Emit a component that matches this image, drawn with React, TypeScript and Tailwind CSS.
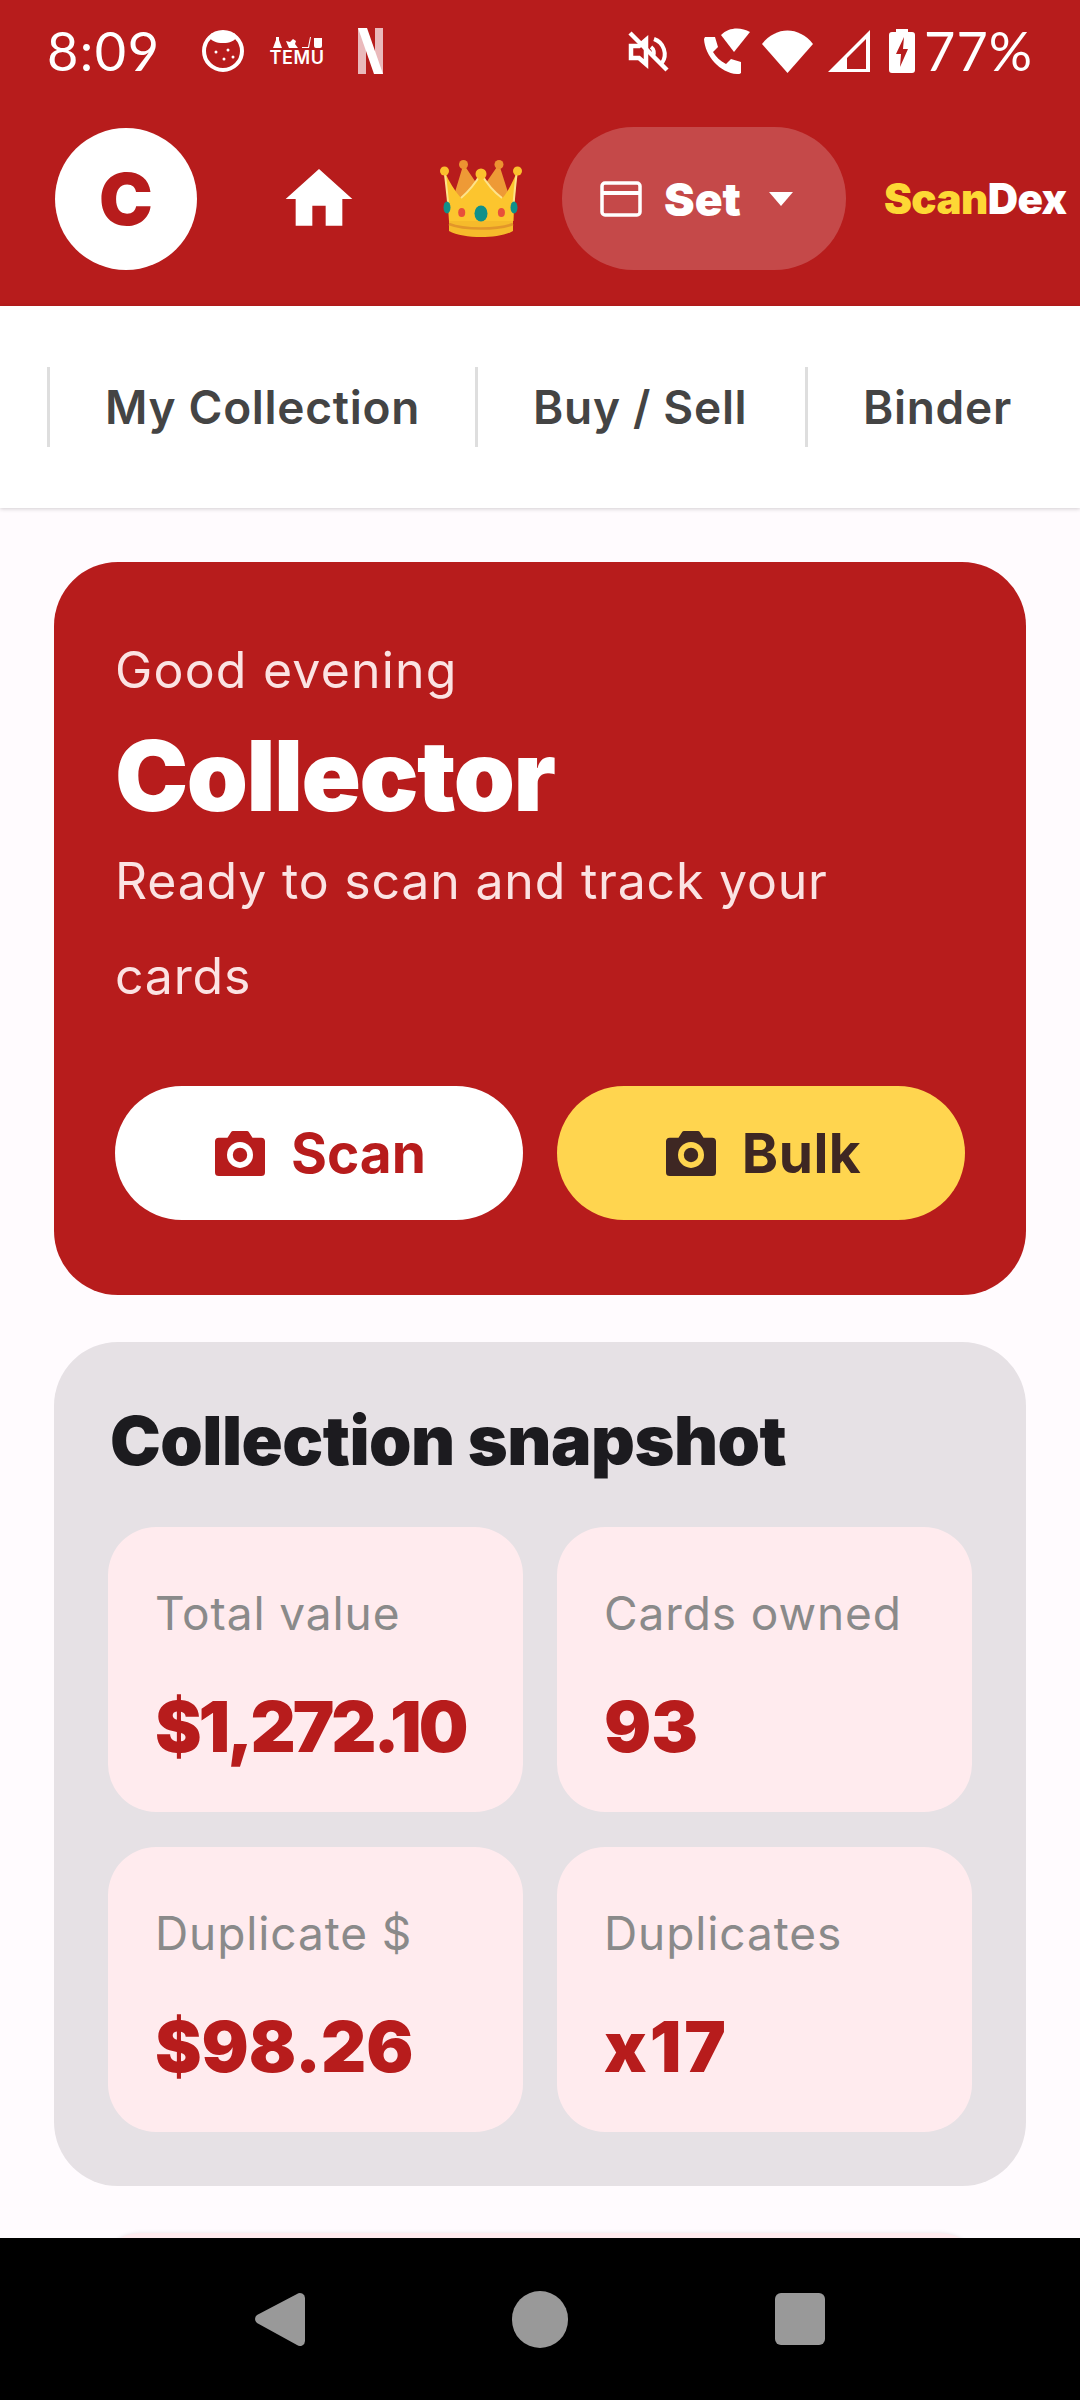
import React from 'react'

const Camera = ({ lens }: { lens: string }) => (
  <svg viewBox="0 0 52 47" className="w-[50px] h-[47px]">
    <path d="M17 1a2 2 0 0 1 2-1h14a2 2 0 0 1 2 1l4 6h9a4 4 0 0 1 4 4v32a4 4 0 0 1-4 4H4a4 4 0 0 1-4-4V11a4 4 0 0 1 4-4h9z" fill="currentColor" />
    <circle cx="26" cy="25" r="13.5" fill={lens} />
    <circle cx="26" cy="25" r="7.5" fill="currentColor" />
  </svg>
)

const Crown = () => (
  <svg viewBox="0 0 84 77" className="w-[84px] h-[77px]">
    <path d="M12 42 23.5 4 41 30 59 4 71 42 60 56H24z" fill="#ee9a36" />
    <path d="M4.5 11c2 14 3 27 4.500 50h64.500c1-23 2-36 4-50-5 11-9 20-15 27C54 32 47 24 41 13.500 35 24 28 32 21 38 15 31 9 22 4.500 11z" fill="#fcc52e" />
    <path d="M4.500 11c2 14 3 27 4.500 40M77 11c-2 14-3 27-4 40M21 38c7-6 14-14 20-24.500 6 10.500 13 18.500 21 24.500" stroke="#fde38a" strokeWidth="2" fill="none" />
    <path d="M9 61h64v10c-15 8-49 8-64 0z" fill="#f6bb2b" />
    <path d="M9 64c15 6 49 6 64 0" stroke="#e2962a" strokeWidth="2.500" fill="none" />
    <circle cx="4.500" cy="11" r="4.500" fill="#fbc02d" />
    <circle cx="77.500" cy="11" r="4.500" fill="#fbc02d" />
    <circle cx="23.500" cy="4.500" r="4.500" fill="#ec9231" />
    <circle cx="59" cy="4.500" r="4.500" fill="#ec9231" />
    <circle cx="41" cy="14" r="5.500" fill="#fbc02d" />
    <ellipse cx="41" cy="53.500" rx="6.500" ry="8" fill="#10908a" />
    <ellipse cx="21.700" cy="52.500" rx="3.500" ry="4.500" fill="#e8503a" />
    <ellipse cx="61.400" cy="52.500" rx="3.500" ry="4.500" fill="#e8503a" />
    <ellipse cx="7" cy="47.500" rx="3.500" ry="6" fill="#10908a" />
    <ellipse cx="74" cy="47.500" rx="3.500" ry="6" fill="#10908a" />
  </svg>
)

const StatusIcons = () => (
  <div className="flex items-center text-white">
    <svg viewBox="0 0 41 41" className="w-[41px] h-[41px] mr-[35px]">
      <path d="M3 15h8l7-6v24l-7-6H3z" fill="none" stroke="white" strokeWidth="4.500" />
      <path d="M26 8a16 16 0 0 1 8 24M23 16a7 7 0 0 1 2 9" fill="none" stroke="white" strokeWidth="4" />
      <path d="M2 2l37 37" stroke="white" strokeWidth="4.500" />
    </svg>
    <svg viewBox="0 0 46 46" className="w-[46px] h-[46px] mr-[12px]">
      <path d="M1 9h10l3 10-5 5c3 5 7 9 13 12l5-5 10 3v11c-1 1-2 1-4 1C16 45 1 28 0 11z" fill="white" />
      <path d="M17 7C25-1 37-1 46 4L30 24z" fill="white" />
    </svg>
    <svg viewBox="0 0 51 43" className="w-[51px] h-[43px] mr-[15px]">
      <path d="M0 14C14-4 37-4 51 14L25.500 43z" fill="white" />
    </svg>
    <svg viewBox="0 0 42 42" className="w-[42px] h-[42px] mr-[19px]">
      <path d="M42 0v42H0zM38 9 19 28v11h19z" fill="white" fillRule="evenodd" />
    </svg>
    <svg viewBox="0 0 26 44" className="w-[26px] h-[44px] mr-[9px]">
      <path d="M7 0h12v3h4a3 3 0 0 1 3 3v35a3 3 0 0 1-3 3H3a3 3 0 0 1-3-3V6a3 3 0 0 1 3-3h4z" fill="white" />
      <path d="M15 8 7 25h5l-1 13 8-18h-5z" fill="#b71c1c" />
    </svg>
    <span className="text-[54px] leading-none font-['Lato',sans-serif] tracking-[1px]">77%</span>
  </div>
)

const Stat = ({ label, value, fit }: { label: string; value: string; fit?: string }) => (
  <div className="h-[285px] rounded-[48px] bg-[#ffebee] pl-[47px] pt-[54px]">
    <p className="text-[46px] leading-[64px] text-[#8a8a8a] tracking-[0.9px]">{label}</p>
    <p className={`mt-[42px] text-[70px] leading-[80px] font-black text-[#b71c1c] whitespace-nowrap ${fit ?? ''}`}>{value}</p>
  </div>
)

const tabs = [
  { label: 'My Collection', w: 'w-[428px]' },
  { label: 'Buy / Sell', w: 'w-[330px]' },
  { label: 'Binder', w: 'w-[275px]' },
]

export default function App() {
  return (
    <div className="h-[2400px] w-[1080px] overflow-hidden flex flex-col bg-[#fffbfe] font-['Inter',sans-serif]">
      <header className="h-[306px] shrink-0 bg-[#b71c1c]">
        <div className="flex h-[106px] items-center justify-between pl-[47px] pr-[47px] pb-[4px]">
          <div className="flex items-center text-white">
            <span className="text-[54px] leading-none font-['Lato',sans-serif] tracking-[1.5px] w-[155px]">8:09</span>
            <svg viewBox="0 0 42 42" className="w-[42px] h-[42px] mr-[27px]">
              <circle cx="21" cy="21" r="19" fill="#b71c1c" stroke="white" strokeWidth="4" />
              <path d="M7 7c3 4 7 6 14 6s11-2 14-6l-3-4H10z" fill="white" />
              <circle cx="14" cy="22" r="1.500" fill="white" />
              <circle cx="26" cy="20" r="1.500" fill="white" />
              <circle cx="22" cy="29" r="1.500" fill="white" />
              <circle cx="31" cy="27" r="1.500" fill="white" />
            </svg>
            <div className="w-[52px] flex flex-col items-center">
              <svg viewBox="0 0 50 11" className="w-[50px] h-[11px]">
                <path d="M4 0h3v3l3 8H1l3-8zM14 4l4 1 3-3 3 2-1 3 3 4h-9zM30 10h6l2-10h1l-2 11h-7zM42 1h8v8a2 2 0 0 1-2 2h-4a2 2 0 0 1-2-2z" fill="white" />
              </svg>
              <span className="text-[18px] leading-[16px] font-semibold tracking-[0.6px] mt-[2px]">TEMU</span>
            </div>
            <svg viewBox="0 0 25 46" className="w-[25px] h-[46px] ml-[35px]">
              <path d="M0 0h8v46H0zM17 0h8v46h-8z" fill="#eab9bb" />
              <path d="M0 0h9l16 46h-9z" fill="white" />
            </svg>
          </div>
          <StatusIcons />
        </div>
        <div className="flex items-center pt-[21px] pl-[55px]">
          <div className="w-[142px] h-[142px] rounded-full bg-white flex items-center justify-center text-[72px] font-black text-[#b71c1c]">
            C
          </div>
          <svg viewBox="0 0 24 24" className="w-[80px] h-[82px] ml-[82px]">
            <path d="M10 20v-6h4v6h5v-8h3L12 3 2 12h3v8z" fill="white" />
          </svg>
          <div className="ml-[81px] w-[84px]">
            <Crown />
          </div>
          <div className="ml-[38px] h-[143px] w-[284px] rounded-full bg-white/20 flex items-center pl-[38px] text-white">
            <svg viewBox="0 0 42 36" className="w-[42px] h-[36px]">
              <rect x="2" y="2" width="38" height="32" rx="3" fill="none" stroke="white" strokeWidth="3.500" />
              <path d="M2 12h38" stroke="white" strokeWidth="4" />
            </svg>
            <span className="ml-[22px] text-[46px] font-black leading-none">Set</span>
            <svg viewBox="0 0 24 14" className="w-[24px] h-[14px] ml-[28px]">
              <path d="M0 0h24L12 14z" fill="white" />
            </svg>
          </div>
          <div className="ml-[38px] text-[42px] font-black leading-none whitespace-nowrap tracking-[-0.6px]">
            <span className="text-[#fdd835]">Scan</span>
            <span className="text-white">Dex</span>
          </div>
        </div>
      </header>

      <nav className="h-[202px] shrink-0 bg-white flex items-center pl-[47px] shadow-[0_1px_4px_rgba(0,0,0,0.18)] relative">
        {tabs.map((t) => (
          <div key={t.label} className={`${t.w} h-[80px] border-l-[3px] border-[#dedede] flex items-center pl-[55px] shrink-0`}>
            <span className="text-[46px] font-semibold text-[#444444] whitespace-nowrap tracking-[0.7px]">{t.label}</span>
          </div>
        ))}
      </nav>

      <main className="flex-1 min-h-0 overflow-hidden px-[54px] pt-[54px] flex flex-col gap-[47px]">
        <section className="h-[733px] shrink-0 rounded-[64px] bg-[#b71c1c] px-[61px] pt-[78px] text-white">
          <p className="text-[50px] leading-[60px] text-[#fbe3e3] tracking-[1.2px]">Good evening</p>
          <h1 className="mt-[21px] text-[98px] leading-[110px] font-black tracking-[-1.5px]">Collector</h1>
          <p className="mt-[3px] max-w-[800px] text-[50px] leading-[95px] text-[#fbe3e3] tracking-[0.8px]">Ready to scan and track your cards</p>
          <div className="mt-[62px] grid grid-cols-2 gap-[34px]">
            <button className="h-[134px] rounded-full bg-white flex items-center justify-center gap-[26px] text-[#b71c1c] text-[55px] font-bold pl-[3px]">
              <Camera lens="#ffffff" />
              Scan
            </button>
            <button className="h-[134px] rounded-full bg-[#ffd54f] flex items-center justify-center gap-[26px] text-[#3e2723] text-[55px] font-bold tracking-[0.5px] pl-[5px]">
              <Camera lens="#ffd54f" />
              Bulk
            </button>
          </div>
        </section>

        <section className="h-[844px] shrink-0 rounded-[64px] bg-[#e6e1e5] px-[54px] pt-[58px]">
          <h2 className="text-[68px] leading-[80px] font-black tracking-[-0.5px] text-[#1c1b1f] pl-[2px]">Collection snapshot</h2>
          <div className="mt-[47px] grid grid-cols-2 gap-x-[34px] gap-y-[35px]">
            <Stat label="Total value" value="$1,272.10" fit="tracking-[-3px]" />
            <Stat label="Cards owned" value="93" />
            <Stat label="Duplicate $" value="$98.26" />
            <Stat label="Duplicates" value="x17" fit="tracking-[3px]" />
          </div>
        </section>

        <div className="h-[40px] mx-[46px] shrink-0 rounded-t-[40px] bg-[#ffebee] shadow-[0_0_4px_rgba(0,0,0,0.1)]" />
      </main>

      <footer className="h-[162px] shrink-0 bg-black flex items-center pl-[255px]">
        <svg viewBox="0 0 50 57" className="w-[50px] h-[57px]">
          <path d="M42 3 2 24a5 5 0 0 0 0 8l40 22a5 5 0 0 0 8-4V7a5 5 0 0 0-8-4z" fill="#999999" />
        </svg>
        <div className="ml-[207px] w-[56px] h-[57px] rounded-full bg-[#999999]" />
        <div className="ml-[207px] w-[50px] h-[52px] rounded-[6px] bg-[#999999]" />
      </footer>
    </div>
  )
}
